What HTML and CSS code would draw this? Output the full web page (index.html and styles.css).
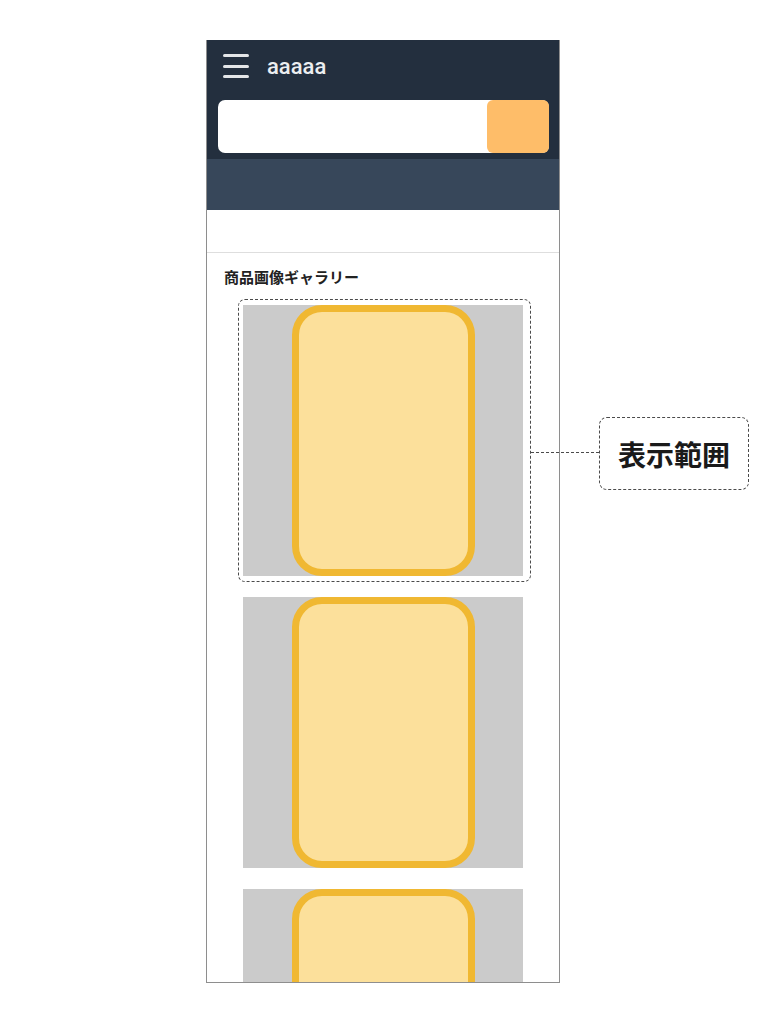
FILE: index.html
```html
<!DOCTYPE html>
<html lang="ja">

<head>
    <meta charset="UTF-8" />
    <meta name="viewport" content="width=device-width, initial-scale=1.0" />
    <title>商品画像ギャラリー</title>
    <link rel="stylesheet" href="styles.css">
</head>

<body>
    <div class="mock">
        <div class="phone">
            <header class="top-bar">
                <div class="brand-row">
                    <button class="menu-btn" type="button" aria-label="Menu">
                        <span></span><span></span><span></span>
                    </button>
                    <span class="brand">aaaaa</span>
                </div>
                <form class="search">
                    <input type="text" aria-label="Search" />
                    <button type="submit" aria-label="Search"></button>
                </form>
            </header>
            <nav class="sub-bar"></nav>
            <div class="blank-row"></div>

            <section class="gallery">
                <h2>商品画像ギャラリー</h2>
                <div class="gallery-list">
                    <div class="view-range">
                        <div class="shot"><div class="product"></div></div>
                    </div>
                    <div class="shot"><div class="product"></div></div>
                    <div class="shot"><div class="product"></div></div>
                </div>
            </section>
        </div>

        <!-- note pointing at the visible area -->
        <div class="note-line"></div>
        <div class="note">表示範囲</div>
    </div>
</body>

</html>
```

FILE: styles.css
```css
* {
    margin: 0;
    padding: 0;
    box-sizing: border-box;
}

body {
    background: #ffffff;
    font-family: "Noto Sans", "Noto Sans CJK JP", sans-serif;
}

.mock {
    position: relative;
    padding: 40px 0 0 206px;
    height: 1024px;
}

.phone {
    width: 354px;
    height: 943px;
    border: 1px solid #8e8e8e;
    border-top: none;
    overflow: hidden;
    background: #ffffff;
}

.top-bar {
    background: #232f3e;
    padding: 8px 10px 6px 11px;
}

.brand-row {
    display: flex;
    align-items: center;
    gap: 18px;
    height: 36px;
    padding-left: 5px;
    margin-bottom: 16px;
}

.menu-btn {
    display: flex;
    flex-direction: column;
    justify-content: space-between;
    width: 26px;
    height: 24px;
    background: none;
    border: none;
}

.menu-btn span {
    display: block;
    height: 3px;
    border-radius: 2px;
    background: #e4e6e8;
}

.brand {
    color: #eceef0;
    font-family: Roboto, "Liberation Sans", sans-serif;
    font-size: 22px;
    font-weight: 500;
    line-height: 1;
    padding-top: 2px;
}

.search {
    display: flex;
    height: 53px;
    background: #ffffff;
    border-radius: 7px;
}

.search input {
    flex: 1;
    border: none;
    background: transparent;
}

.search button {
    width: 62px;
    border: none;
    border-radius: 6px;
    background: #febd69;
}

.sub-bar {
    height: 51px;
    background: #37475a;
}

.blank-row {
    height: 43px;
    border-bottom: 1px solid #dedede;
}

.gallery {
    padding: 14px 0 0;
}

.gallery h2 {
    font-family: "Noto Sans CJK JP", sans-serif;
    font-size: 15px;
    font-weight: 700;
    line-height: 20px;
    color: #222222;
    padding-left: 17px;
    margin-bottom: 12px;
}

.gallery-list {
    display: flex;
    flex-direction: column;
    align-items: flex-start;
    gap: 21px;
    padding-left: 36px;
}

.view-range {
    margin-left: -5px;
    margin-bottom: -6px;
    padding: 5px 7px 5px 4px;
    border: 1px dashed #4a4a4a;
    border-radius: 7px;
}

.shot {
    display: flex;
    justify-content: center;
    width: 280px;
    height: 271px;
    background: #cbcbcb;
}

.product {
    width: 183px;
    height: 100%;
    background: #fce09b;
    border: 7px solid #f0b832;
    border-radius: 30px;
}

.note-line {
    position: absolute;
    left: 531px;
    top: 452px;
    width: 68px;
    border-top: 1px dashed #4a4a4a;
}

.note {
    position: absolute;
    left: 599px;
    top: 417px;
    width: 150px;
    height: 73px;
    display: flex;
    align-items: center;
    justify-content: center;
    border: 1px dashed #4a4a4a;
    border-radius: 8px;
    font-family: "Noto Sans CJK JP", sans-serif;
    font-size: 28px;
    font-weight: 700;
    color: #1a1a1a;
}
```
